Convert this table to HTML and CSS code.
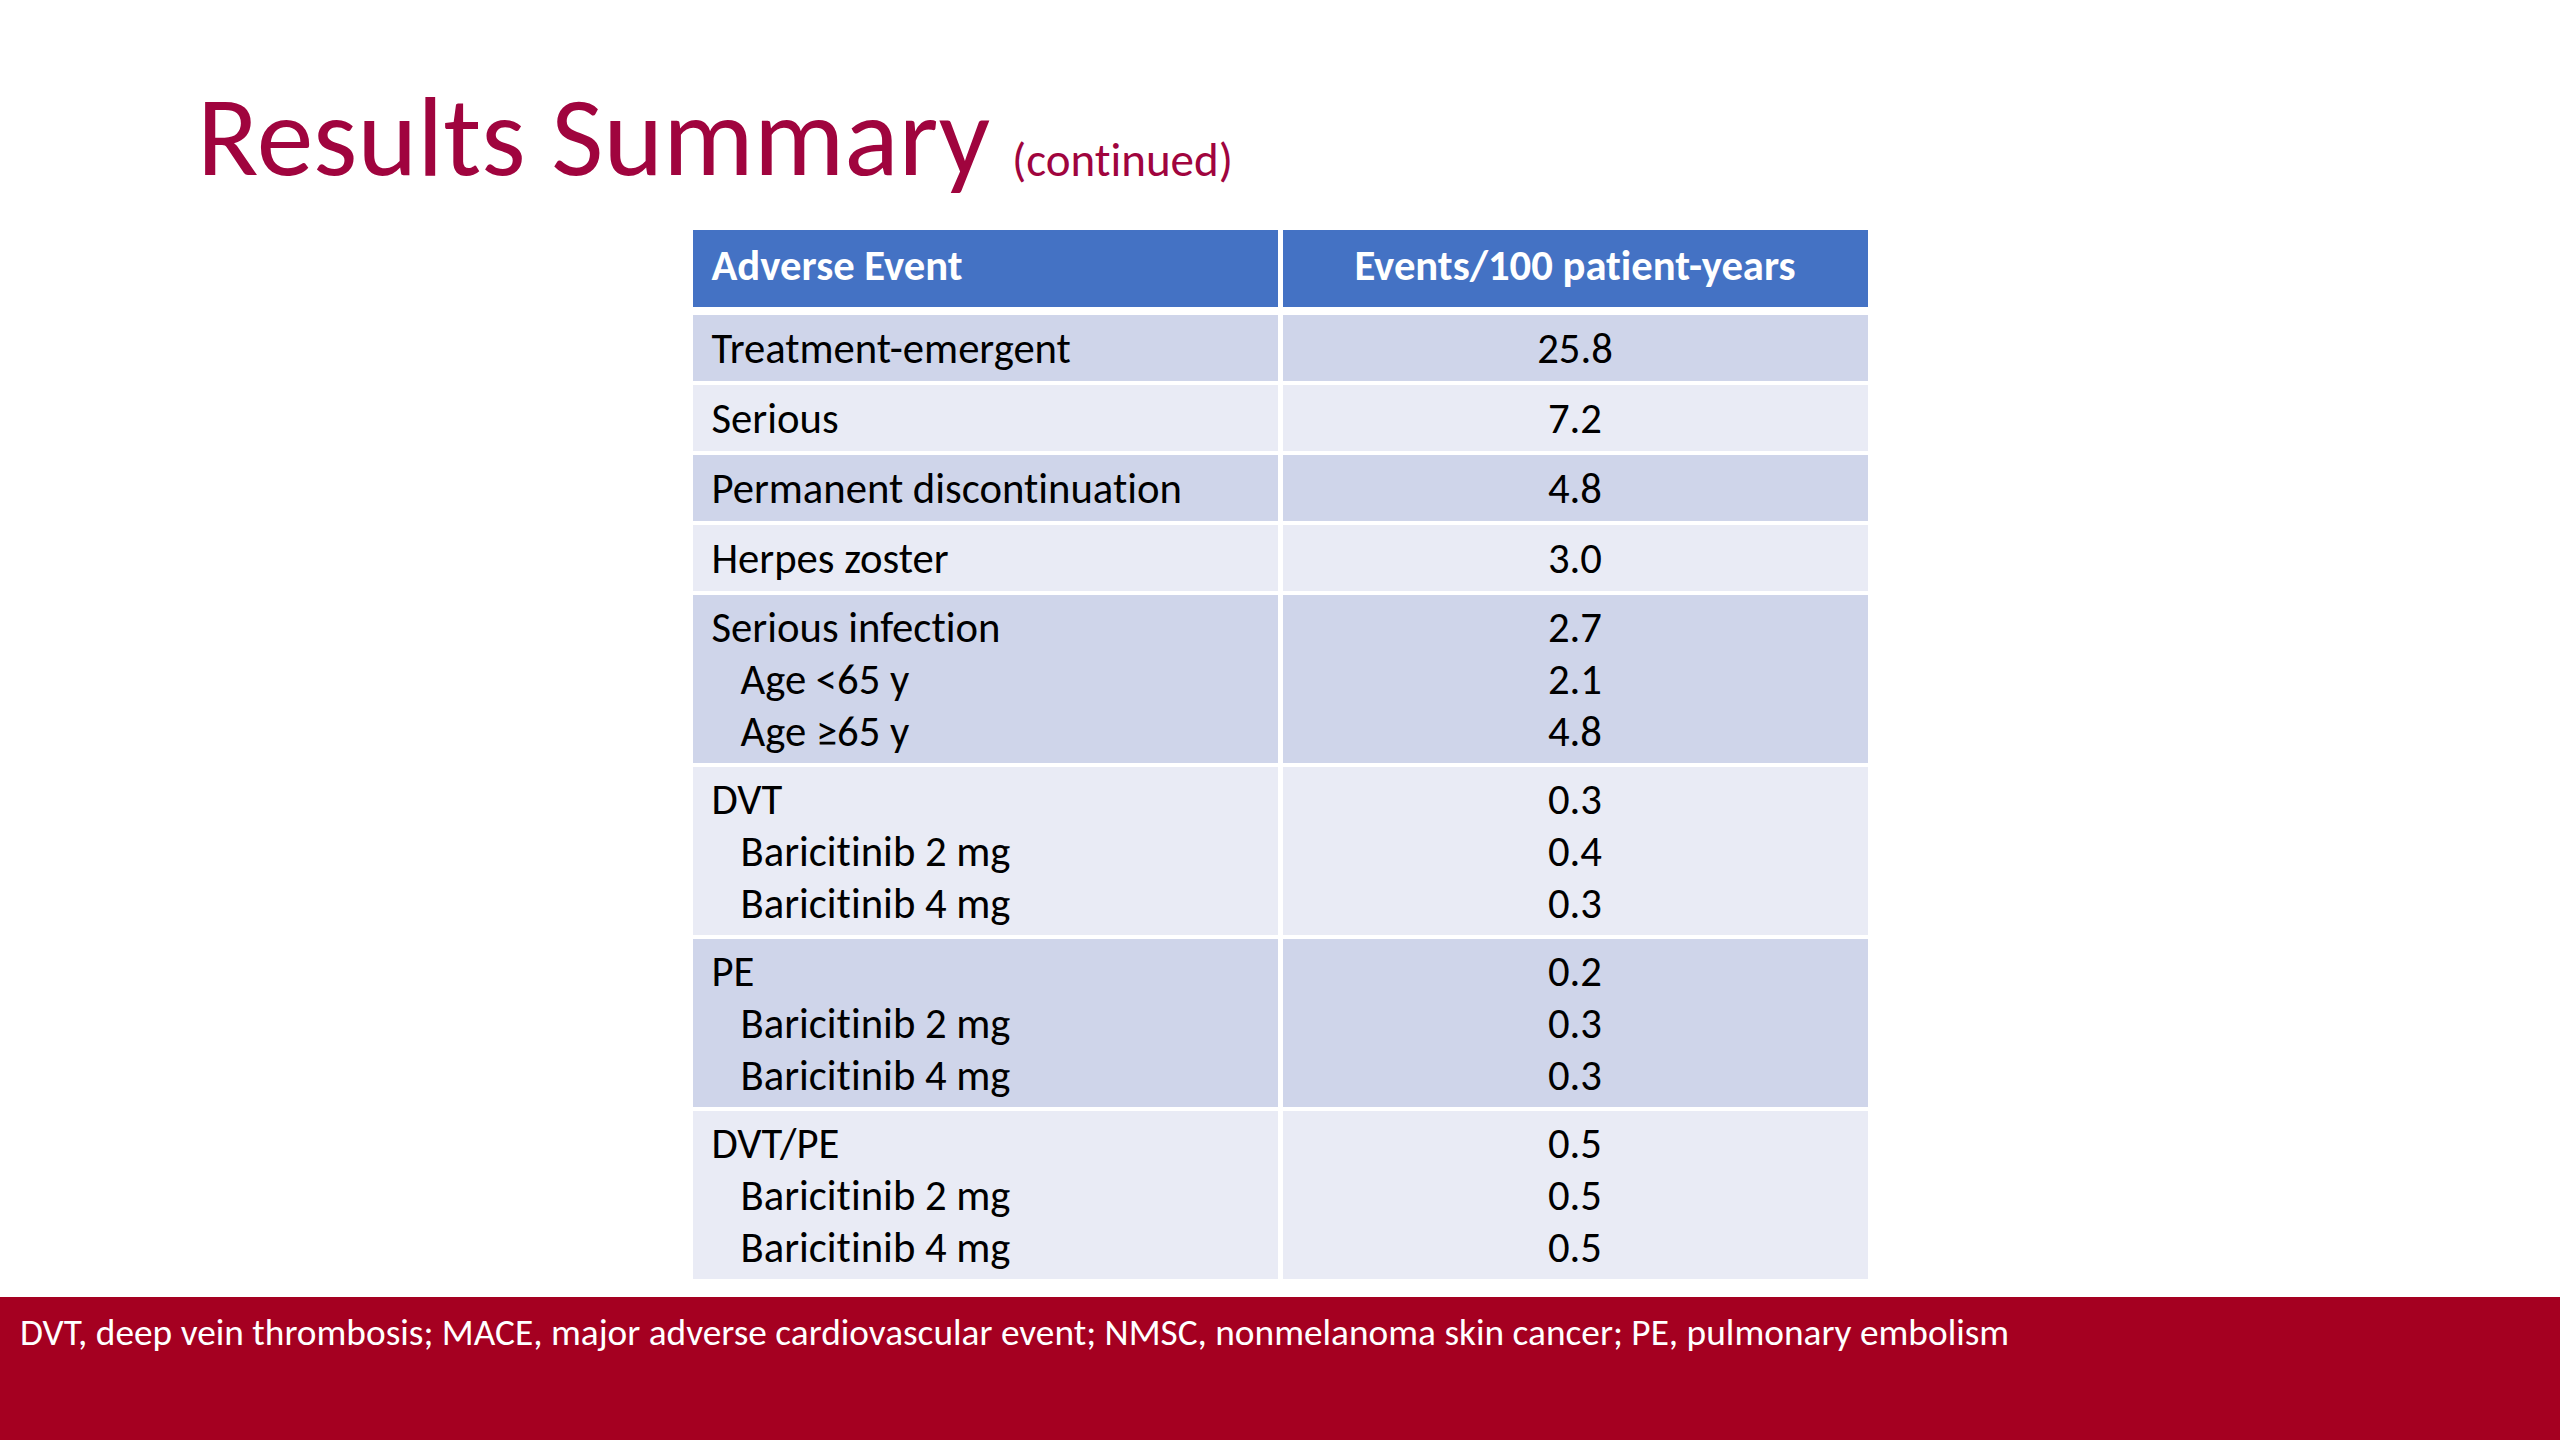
FILE: index.html
```html
<!DOCTYPE html>
<html lang="en">
<head>
<meta charset="utf-8">
<title>Results Summary (continued)</title>
<link rel="stylesheet" href="styles.css">
</head>
<body>
<div class="slide">
  <header class="title-bar">
    <h1 class="title">Results Summary <span class="title-sub">(continued)</span></h1>
  </header>
  <main class="content">
    <div class="ae-table">
      <div class="row head">
        <div class="cell">Adverse Event</div>
        <div class="cell num">Events/100 patient-years</div>
      </div>
      <div class="row dark single">
        <div class="cell"><div>Treatment-emergent</div></div>
        <div class="cell num"><div>25.8</div></div>
      </div>
      <div class="row light single">
        <div class="cell"><div>Serious</div></div>
        <div class="cell num"><div>7.2</div></div>
      </div>
      <div class="row dark single">
        <div class="cell"><div>Permanent discontinuation</div></div>
        <div class="cell num"><div>4.8</div></div>
      </div>
      <div class="row light single">
        <div class="cell"><div>Herpes zoster</div></div>
        <div class="cell num"><div>3.0</div></div>
      </div>
      <div class="row dark multi">
        <div class="cell"><div>Serious infection</div><div class="sub">Age &lt;65 y</div><div class="sub">Age ≥65 y</div></div>
        <div class="cell num"><div>2.7</div><div>2.1</div><div>4.8</div></div>
      </div>
      <div class="row light multi">
        <div class="cell"><div>DVT</div><div class="sub">Baricitinib 2 mg</div><div class="sub">Baricitinib 4 mg</div></div>
        <div class="cell num"><div>0.3</div><div>0.4</div><div>0.3</div></div>
      </div>
      <div class="row dark multi">
        <div class="cell"><div>PE</div><div class="sub">Baricitinib 2 mg</div><div class="sub">Baricitinib 4 mg</div></div>
        <div class="cell num"><div>0.2</div><div>0.3</div><div>0.3</div></div>
      </div>
      <div class="row light multi">
        <div class="cell"><div>DVT/PE</div><div class="sub">Baricitinib 2 mg</div><div class="sub">Baricitinib 4 mg</div></div>
        <div class="cell num"><div>0.5</div><div>0.5</div><div>0.5</div></div>
      </div>
    </div>
  </main>
  <footer class="footnote">
    DVT, deep vein thrombosis; MACE, major adverse cardiovascular event; NMSC, nonmelanoma skin cancer; PE, pulmonary embolism
  </footer>
</div>
</body>
</html>
```

FILE: styles.css
```css
html, body {
  margin: 0;
  padding: 0;
  background: #ffffff;
}

body {
  font-family: Carlito, Calibri, "Liberation Sans", sans-serif;
  font-variant-ligatures: none;
}

.slide {
  width: 2560px;
  height: 1440px;
  display: flex;
  flex-direction: column;
  overflow: hidden;
}

.title-bar {
  padding: 67px 0 0 197px;
  height: 230px;
  box-sizing: border-box;
  flex: none;
}

.title {
  margin: 0;
  font-weight: normal;
  font-size: 113.5px;
  line-height: 1.22;
  color: #a0043e;
  white-space: nowrap;
}

.title-sub {
  font-size: 47px;
  margin-left: -4px;
  position: relative;
  top: 1px;
}

.content {
  display: flex;
  justify-content: center;
}

.ae-table {
  display: flex;
  flex-direction: column;
  gap: 4px;
  width: 1175px;
  font-size: 42.67px;
  line-height: 52px;
  color: #000000;
}

.row {
  display: grid;
  grid-template-columns: 585px 585px;
  column-gap: 5px;
}

.cell {
  display: flex;
  flex-direction: column;
  justify-content: center;
  padding: 6px 19px;
}

.cell.num {
  align-items: center;
  text-align: center;
}

.sub {
  padding-left: 29px;
}

.head {
  height: 77px;
  margin-bottom: 4px;
}

.head .cell {
  background: #4472c4;
  color: #ffffff;
  font-weight: bold;
  padding-top: 0;
  padding-bottom: 8px;
}

.single {
  height: 66px;
}

.single .cell {
  padding-top: 0;
  padding-bottom: 0;
}

.multi {
  height: 168px;
}

.dark .cell {
  background: #cfd5ea;
}

.light .cell {
  background: #e9ebf5;
}

.footnote {
  margin-top: auto;
  height: 143px;
  box-sizing: border-box;
  background: #a50021;
  color: #ffffff;
  font-size: 37.33px;
  line-height: 45px;
  padding: 13px 20px 0 20px;
  white-space: nowrap;
}
```
